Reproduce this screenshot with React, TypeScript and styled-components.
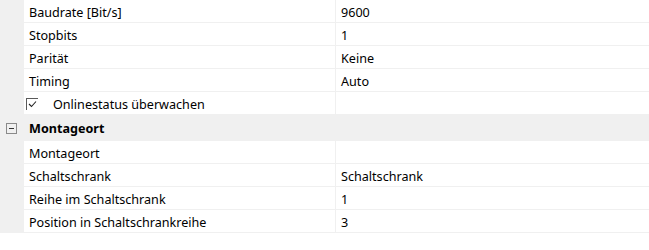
import styled, { createGlobalStyle } from "styled-components";

const Global = createGlobalStyle`
  html, body {
    margin: 0;
    padding: 0;
    background: #ffffff;
  }
  body {
    font-family: "Noto Sans", "Open Sans", "Liberation Sans", sans-serif;
    font-size: 12.6px;
    color: #000000;
  }
`;

const Grid = styled.div`
  width: 649px;
  display: flex;
  flex-direction: column;
`;

// eine Zeile: Randspalte, Name, Wert
const Row = styled.div`
  display: grid;
  grid-template-columns: 24px 311px 1fr;
  height: 23px;
`;

const Gutter = styled.div`
  background: #f0f0f0;
`;

const NameCell = styled.div<{ $indent?: boolean }>`
  display: flex;
  align-items: center;
  gap: 15px;
  padding: 2px 0 0 ${(p) => (p.$indent ? "2px" : "5px")};
  background: #ffffff;
  border-bottom: 1px solid #f0f0f0;
  white-space: nowrap;
`;

const ValueCell = styled.div`
  display: flex;
  align-items: center;
  padding: 2px 0 0 5px;
  background: #ffffff;
  border-left: 1px solid #f0f0f0;
  border-bottom: 1px solid #f0f0f0;
  white-space: nowrap;
`;

const CategoryRow = styled.div`
  display: flex;
  align-items: center;
  height: 26px;
  padding-top: 1px;
  box-sizing: border-box;
  background: #f0f0f0;
`;

const Toggle = styled.span`
  width: 24px;
  display: flex;
  justify-content: center;
`;

const Box = styled.span`
  width: 9px;
  height: 9px;
  border: 1px solid #8a8a8a;
  display: flex;
  align-items: center;
  justify-content: center;
  margin-right: 1px;
  &::after {
    content: "";
    width: 5px;
    height: 1px;
    background: #333333;
  }
`;

const CategoryTitle = styled.span`
  font-weight: 700;
  padding-left: 5px;
`;

const Check = styled.span`
  width: 11px;
  height: 11px;
  margin-top: -1px;
  border-top: 1px solid #5a5a5a;
  border-left: 1px solid #5a5a5a;
  display: flex;
  align-items: center;
  justify-content: center;
`;

const Filler = styled.div`
  height: 17px;
  background: #ffffff;
`;

type Prop = { name: string; value: string };

const kommunikation: Prop[] = [
  { name: "Baudrate [Bit/s]", value: "9600" },
  { name: "Stopbits", value: "1" },
  { name: "Parität", value: "Keine" },
  { name: "Timing", value: "Auto" },
];

const montageort: Prop[] = [
  { name: "Montageort", value: "" },
  { name: "Schaltschrank", value: "Schaltschrank" },
  { name: "Reihe im Schaltschrank", value: "1" },
  { name: "Position in Schaltschrankreihe", value: "3" },
];

const PropRow = ({ name, value }: Prop) => (
  <Row>
    <Gutter />
    <NameCell>{name}</NameCell>
    <ValueCell>{value}</ValueCell>
  </Row>
);

export default function App() {
  return (
    <>
      <Global />
      <Grid>
        {kommunikation.map((p) => (
          <PropRow key={p.name} {...p} />
        ))}
        <Row>
          <Gutter />
          <NameCell $indent>
            <Check>
              <svg width="9" height="8" viewBox="0 0 9 8">
                <path d="M1 4 L3.5 6.5 L8 1.5" fill="none" stroke="#222" strokeWidth="1.1" />
              </svg>
            </Check>
            Onlinestatus überwachen
          </NameCell>
          <ValueCell />
        </Row>
        <CategoryRow>
          <Toggle>
            <Box />
          </Toggle>
          <CategoryTitle>Montageort</CategoryTitle>
        </CategoryRow>
        {montageort.map((p) => (
          <PropRow key={p.name} {...p} />
        ))}
        <Filler />
      </Grid>
    </>
  );
}
